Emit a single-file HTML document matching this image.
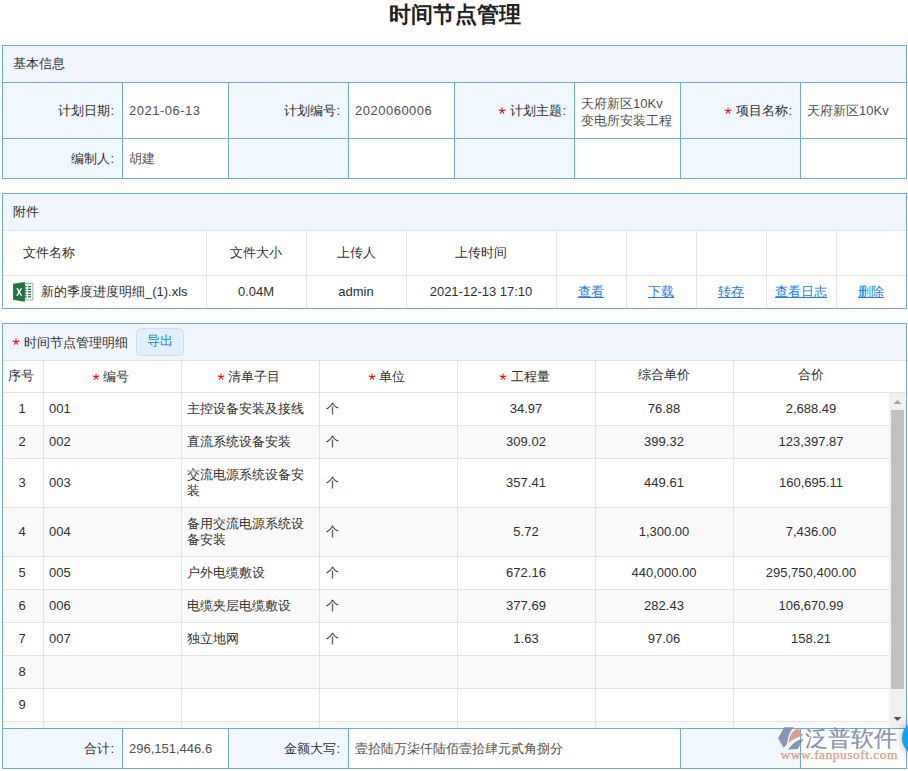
<!DOCTYPE html><html><head><meta charset="utf-8"><style>
html,body{margin:0;padding:0;background:#fff;width:908px;height:771px;overflow:hidden;position:relative}
body{font-family:"Liberation Sans",sans-serif;font-size:13px;color:#303030}
.ab{position:absolute}
.hl{position:absolute;height:1px}
.vl{position:absolute;width:1px}
.t{position:absolute;white-space:nowrap;line-height:17px}
.r{text-align:right}
.c{text-align:center}
.v{color:#505050}
.lk{color:#1e7ce8;text-decoration:underline}
</style></head><body>

<div class="t c " style="left:305.0px;width:300px;top:2px;font-size:22px;font-weight:bold;line-height:26px;color:#222">时间节点管理</div>
<div class="ab" style="left:2px;top:45px;width:905px;height:134px;background:#fff;"></div>
<div class="ab" style="left:3px;top:46px;width:903px;height:36px;background:#f0f5fe;"></div>
<div class="ab" style="left:3px;top:83px;width:119px;height:55px;background:#f0f7fe;"></div>
<div class="ab" style="left:229px;top:83px;width:119px;height:55px;background:#f0f7fe;"></div>
<div class="ab" style="left:455px;top:83px;width:119px;height:55px;background:#f0f7fe;"></div>
<div class="ab" style="left:681px;top:83px;width:119px;height:55px;background:#f0f7fe;"></div>
<div class="ab" style="left:3px;top:139px;width:119px;height:39px;background:#f0f7fe;"></div>
<div class="ab" style="left:229px;top:139px;width:119px;height:39px;background:#f0f7fe;"></div>
<div class="ab" style="left:455px;top:139px;width:119px;height:39px;background:#f0f7fe;"></div>
<div class="ab" style="left:681px;top:139px;width:119px;height:39px;background:#f0f7fe;"></div>
<div class="hl" style="left:2px;top:45px;width:905px;background:#6ea8dd"></div>
<div class="hl" style="left:2px;top:82px;width:905px;background:#6ea8dd"></div>
<div class="hl" style="left:2px;top:138px;width:905px;background:#6ea8dd"></div>
<div class="hl" style="left:2px;top:178px;width:905px;background:#6ea8dd"></div>
<div class="vl" style="left:2px;top:45px;height:134px;background:#6ea8dd"></div>
<div class="vl" style="left:122px;top:82px;height:97px;background:#6ea8dd"></div>
<div class="vl" style="left:228px;top:82px;height:97px;background:#6ea8dd"></div>
<div class="vl" style="left:348px;top:82px;height:97px;background:#6ea8dd"></div>
<div class="vl" style="left:454px;top:82px;height:97px;background:#6ea8dd"></div>
<div class="vl" style="left:574px;top:82px;height:97px;background:#6ea8dd"></div>
<div class="vl" style="left:680px;top:82px;height:97px;background:#6ea8dd"></div>
<div class="vl" style="left:800px;top:82px;height:97px;background:#6ea8dd"></div>
<div class="vl" style="left:906px;top:45px;height:134px;background:#6ea8dd"></div>
<div class="t " style="left:13px;top:55px;">基本信息</div>
<div class="t r " style="right:794px;top:102px;">计划日期:</div>
<div class="t v" style="left:129px;top:102px;letter-spacing:0.5px">2021-06-13</div>
<div class="t r " style="right:568px;top:102px;">计划编号:</div>
<div class="t v" style="left:355px;top:102px;letter-spacing:0.5px">2020060006</div>
<div class="t r " style="right:342px;top:102px;">计划主题:</div>
<svg class="ab" style="left:497.9px;top:107.2px" width="8" height="8" viewBox="-4 -4 8 8"><path d="M0 0V-3.1M0 0L-2.9 -1.1M0 0L2.9 -1.1M0 0L-1.7 2.3M0 0L1.7 2.3" stroke="#f00" stroke-width="1.05" stroke-linecap="round" fill="none"/></svg>
<div class="t v" style="left:581px;top:95px;">天府新区10Kv<br>变电所安装工程</div>
<div class="t r " style="right:116px;top:102px;">项目名称:</div>
<svg class="ab" style="left:723.9px;top:107.2px" width="8" height="8" viewBox="-4 -4 8 8"><path d="M0 0V-3.1M0 0L-2.9 -1.1M0 0L2.9 -1.1M0 0L-1.7 2.3M0 0L1.7 2.3" stroke="#f00" stroke-width="1.05" stroke-linecap="round" fill="none"/></svg>
<div class="t v" style="left:807px;top:102px;">天府新区10Kv</div>
<div class="t r " style="right:794px;top:150px;">编制人:</div>
<div class="t v" style="left:129px;top:150px;">胡建</div>
<div class="ab" style="left:2px;top:193px;width:905px;height:116px;background:#fff;"></div>
<div class="ab" style="left:3px;top:194px;width:903px;height:36px;background:#f0f5fe;"></div>
<div class="hl" style="left:2px;top:193px;width:905px;background:#6ea8dd"></div>
<div class="hl" style="left:2px;top:308px;width:905px;background:#6ea8dd"></div>
<div class="vl" style="left:2px;top:193px;height:116px;background:#6ea8dd"></div>
<div class="vl" style="left:906px;top:193px;height:116px;background:#6ea8dd"></div>
<div class="hl" style="left:3px;top:230px;width:903px;background:#e4e4e4"></div>
<div class="hl" style="left:3px;top:275px;width:903px;background:#e4e4e4"></div>
<div class="vl" style="left:206px;top:231px;height:77px;background:#e4e4e4"></div>
<div class="vl" style="left:306px;top:231px;height:77px;background:#e4e4e4"></div>
<div class="vl" style="left:406px;top:231px;height:77px;background:#e4e4e4"></div>
<div class="vl" style="left:556px;top:231px;height:77px;background:#e4e4e4"></div>
<div class="vl" style="left:626px;top:231px;height:77px;background:#e4e4e4"></div>
<div class="vl" style="left:696px;top:231px;height:77px;background:#e4e4e4"></div>
<div class="vl" style="left:766px;top:231px;height:77px;background:#e4e4e4"></div>
<div class="vl" style="left:836px;top:231px;height:77px;background:#e4e4e4"></div>
<div class="t " style="left:13px;top:203px;">附件</div>
<div class="t " style="left:23px;top:244px;">文件名称</div>
<div class="t c " style="left:106.0px;width:300px;top:244px;">文件大小</div>
<div class="t c " style="left:206.0px;width:300px;top:244px;">上传人</div>
<div class="t c " style="left:331.0px;width:300px;top:244px;">上传时间</div>
<div class="t " style="left:41px;top:283px;">新的季度进度明细_(1).xls</div>
<div class="t c " style="left:106.0px;width:300px;top:283px;">0.04M</div>
<div class="t c " style="left:206.0px;width:300px;top:283px;">admin</div>
<div class="t c " style="left:331.0px;width:300px;top:283px;">2021-12-13 17:10</div>
<div class="t c lk" style="left:556.0px;width:70px;top:283px;">查看</div>
<div class="t c lk" style="left:626.0px;width:70px;top:283px;">下载</div>
<div class="t c lk" style="left:696.0px;width:70px;top:283px;">转存</div>
<div class="t c lk" style="left:766.0px;width:70px;top:283px;">查看日志</div>
<div class="t c lk" style="left:836.0px;width:70px;top:283px;">删除</div>
<svg class="ab" style="left:12px;top:281px" width="23" height="22" viewBox="0 0 23 22">
<rect x="13" y="2.5" width="7.8" height="16.5" fill="#fff" stroke="#93bba2" stroke-width="1"/>
<g fill="#217346"><rect x="12.5" y="5" width="2" height="1.3"/><rect x="12.5" y="7.6" width="2" height="1.3"/><rect x="12.5" y="10.2" width="2" height="1.3"/><rect x="12.5" y="12.8" width="2" height="1.3"/><rect x="12.5" y="15.2" width="2" height="1.3"/>
<rect x="16" y="5" width="3" height="1.3"/><rect x="16" y="7.6" width="3" height="1.3"/><rect x="16" y="10.2" width="3" height="1.3"/><rect x="16" y="12.8" width="3" height="1.3"/><rect x="16" y="15.2" width="3" height="1.3"/></g>
<path d="M1.1 2.8 L12.9 1 L12.9 20.8 L1.1 18.8 Z" fill="#217346"/>
<path d="M4.3 7.2h1.6l1.3 2.3 1.3-2.3h1.6L8.1 10.9l2.1 3.8H8.6L7.2 12.3 5.8 14.7H4.2l2.1-3.8Z" fill="#fff"/>
</svg>
<div class="ab" style="left:2px;top:323px;width:905px;height:446px;background:#fff;"></div>
<div class="ab" style="left:3px;top:324px;width:903px;height:36px;background:#f0f5fe;"></div>
<div class="hl" style="left:2px;top:323px;width:905px;background:#6ea8dd"></div>
<div class="vl" style="left:2px;top:323px;height:446px;background:#6ea8dd"></div>
<div class="vl" style="left:906px;top:323px;height:446px;background:#6ea8dd"></div>
<div class="hl" style="left:3px;top:360px;width:903px;background:#e4e4e4"></div>
<svg class="ab" style="left:12.399999999999999px;top:338.2px" width="8" height="8" viewBox="-4 -4 8 8"><path d="M0 0V-3.1M0 0L-2.9 -1.1M0 0L2.9 -1.1M0 0L-1.7 2.3M0 0L1.7 2.3" stroke="#f00" stroke-width="1.05" stroke-linecap="round" fill="none"/></svg>
<div class="t " style="left:24px;top:334px;">时间节点管理明细</div>
<div class="ab" style="left:136px;top:328px;width:46px;height:26px;border:1px solid #cce0f4;border-radius:5px;background:#e2effc;color:#0e7ff0;text-align:center;line-height:24px">导出</div>
<div class="hl" style="left:3px;top:392px;width:903px;background:#e4e4e4"></div>
<div class="vl" style="left:43px;top:361px;height:31px;background:#e4e4e4"></div>
<div class="vl" style="left:181px;top:361px;height:31px;background:#e4e4e4"></div>
<div class="vl" style="left:319px;top:361px;height:31px;background:#e4e4e4"></div>
<div class="vl" style="left:457px;top:361px;height:31px;background:#e4e4e4"></div>
<div class="vl" style="left:595px;top:361px;height:31px;background:#e4e4e4"></div>
<div class="vl" style="left:733px;top:361px;height:31px;background:#e4e4e4"></div>
<div class="t " style="left:8px;top:367px;">序号</div>
<svg class="ab" style="left:92.4px;top:372.7px" width="8" height="8" viewBox="-4 -4 8 8"><path d="M0 0V-3.1M0 0L-2.9 -1.1M0 0L2.9 -1.1M0 0L-1.7 2.3M0 0L1.7 2.3" stroke="#f00" stroke-width="1.05" stroke-linecap="round" fill="none"/></svg>
<div class="t " style="left:103px;top:368px;">编号</div>
<svg class="ab" style="left:217.4px;top:372.7px" width="8" height="8" viewBox="-4 -4 8 8"><path d="M0 0V-3.1M0 0L-2.9 -1.1M0 0L2.9 -1.1M0 0L-1.7 2.3M0 0L1.7 2.3" stroke="#f00" stroke-width="1.05" stroke-linecap="round" fill="none"/></svg>
<div class="t " style="left:228px;top:368px;">清单子目</div>
<svg class="ab" style="left:367.9px;top:372.7px" width="8" height="8" viewBox="-4 -4 8 8"><path d="M0 0V-3.1M0 0L-2.9 -1.1M0 0L2.9 -1.1M0 0L-1.7 2.3M0 0L1.7 2.3" stroke="#f00" stroke-width="1.05" stroke-linecap="round" fill="none"/></svg>
<div class="t " style="left:379px;top:368px;">单位</div>
<svg class="ab" style="left:499.4px;top:372.7px" width="8" height="8" viewBox="-4 -4 8 8"><path d="M0 0V-3.1M0 0L-2.9 -1.1M0 0L2.9 -1.1M0 0L-1.7 2.3M0 0L1.7 2.3" stroke="#f00" stroke-width="1.05" stroke-linecap="round" fill="none"/></svg>
<div class="t " style="left:511px;top:368px;">工程量</div>
<div class="t c " style="left:514.0px;width:300px;top:366px;">综合单价</div>
<div class="t c " style="left:661.0px;width:300px;top:366px;">合价</div>
<div class="ab" style="left:3px;top:393px;width:886px;height:32px;background:#fff;"></div>
<div class="vl" style="left:43px;top:393px;height:32px;background:#e4e4e4"></div>
<div class="vl" style="left:181px;top:393px;height:32px;background:#e4e4e4"></div>
<div class="vl" style="left:319px;top:393px;height:32px;background:#e4e4e4"></div>
<div class="vl" style="left:457px;top:393px;height:32px;background:#e4e4e4"></div>
<div class="vl" style="left:595px;top:393px;height:32px;background:#e4e4e4"></div>
<div class="vl" style="left:733px;top:393px;height:32px;background:#e4e4e4"></div>
<div class="hl" style="left:3px;top:425px;width:886px;background:#e4e4e4"></div>
<div class="t c " style="left:2.0px;width:40px;top:400px;">1</div>
<div class="t " style="left:49px;top:400px;">001</div>
<div class="t " style="left:187px;top:400px;">主控设备安装及接线</div>
<div class="t " style="left:326px;top:400px;">个</div>
<div class="t c " style="left:376.0px;width:300px;top:400px;">34.97</div>
<div class="t c " style="left:514.0px;width:300px;top:400px;">76.88</div>
<div class="t c " style="left:661.0px;width:300px;top:400px;">2,688.49</div>
<div class="ab" style="left:3px;top:426px;width:886px;height:32px;background:#fafafa;"></div>
<div class="vl" style="left:43px;top:426px;height:32px;background:#e4e4e4"></div>
<div class="vl" style="left:181px;top:426px;height:32px;background:#e4e4e4"></div>
<div class="vl" style="left:319px;top:426px;height:32px;background:#e4e4e4"></div>
<div class="vl" style="left:457px;top:426px;height:32px;background:#e4e4e4"></div>
<div class="vl" style="left:595px;top:426px;height:32px;background:#e4e4e4"></div>
<div class="vl" style="left:733px;top:426px;height:32px;background:#e4e4e4"></div>
<div class="hl" style="left:3px;top:458px;width:886px;background:#e4e4e4"></div>
<div class="t c " style="left:2.0px;width:40px;top:433px;">2</div>
<div class="t " style="left:49px;top:433px;">002</div>
<div class="t " style="left:187px;top:433px;">直流系统设备安装</div>
<div class="t " style="left:326px;top:433px;">个</div>
<div class="t c " style="left:376.0px;width:300px;top:433px;">309.02</div>
<div class="t c " style="left:514.0px;width:300px;top:433px;">399.32</div>
<div class="t c " style="left:661.0px;width:300px;top:433px;">123,397.87</div>
<div class="ab" style="left:3px;top:459px;width:886px;height:48px;background:#fff;"></div>
<div class="vl" style="left:43px;top:459px;height:48px;background:#e4e4e4"></div>
<div class="vl" style="left:181px;top:459px;height:48px;background:#e4e4e4"></div>
<div class="vl" style="left:319px;top:459px;height:48px;background:#e4e4e4"></div>
<div class="vl" style="left:457px;top:459px;height:48px;background:#e4e4e4"></div>
<div class="vl" style="left:595px;top:459px;height:48px;background:#e4e4e4"></div>
<div class="vl" style="left:733px;top:459px;height:48px;background:#e4e4e4"></div>
<div class="hl" style="left:3px;top:507px;width:886px;background:#e4e4e4"></div>
<div class="t c " style="left:2.0px;width:40px;top:474px;">3</div>
<div class="t " style="left:49px;top:474px;">003</div>
<div class="t " style="left:187px;top:467px;line-height:16px">交流电源系统设备安<br>装</div>
<div class="t " style="left:326px;top:474px;">个</div>
<div class="t c " style="left:376.0px;width:300px;top:474px;">357.41</div>
<div class="t c " style="left:514.0px;width:300px;top:474px;">449.61</div>
<div class="t c " style="left:661.0px;width:300px;top:474px;">160,695.11</div>
<div class="ab" style="left:3px;top:508px;width:886px;height:48px;background:#fafafa;"></div>
<div class="vl" style="left:43px;top:508px;height:48px;background:#e4e4e4"></div>
<div class="vl" style="left:181px;top:508px;height:48px;background:#e4e4e4"></div>
<div class="vl" style="left:319px;top:508px;height:48px;background:#e4e4e4"></div>
<div class="vl" style="left:457px;top:508px;height:48px;background:#e4e4e4"></div>
<div class="vl" style="left:595px;top:508px;height:48px;background:#e4e4e4"></div>
<div class="vl" style="left:733px;top:508px;height:48px;background:#e4e4e4"></div>
<div class="hl" style="left:3px;top:556px;width:886px;background:#e4e4e4"></div>
<div class="t c " style="left:2.0px;width:40px;top:523px;">4</div>
<div class="t " style="left:49px;top:523px;">004</div>
<div class="t " style="left:187px;top:516px;line-height:16px">备用交流电源系统设<br>备安装</div>
<div class="t " style="left:326px;top:523px;">个</div>
<div class="t c " style="left:376.0px;width:300px;top:523px;">5.72</div>
<div class="t c " style="left:514.0px;width:300px;top:523px;">1,300.00</div>
<div class="t c " style="left:661.0px;width:300px;top:523px;">7,436.00</div>
<div class="ab" style="left:3px;top:557px;width:886px;height:32px;background:#fff;"></div>
<div class="vl" style="left:43px;top:557px;height:32px;background:#e4e4e4"></div>
<div class="vl" style="left:181px;top:557px;height:32px;background:#e4e4e4"></div>
<div class="vl" style="left:319px;top:557px;height:32px;background:#e4e4e4"></div>
<div class="vl" style="left:457px;top:557px;height:32px;background:#e4e4e4"></div>
<div class="vl" style="left:595px;top:557px;height:32px;background:#e4e4e4"></div>
<div class="vl" style="left:733px;top:557px;height:32px;background:#e4e4e4"></div>
<div class="hl" style="left:3px;top:589px;width:886px;background:#e4e4e4"></div>
<div class="t c " style="left:2.0px;width:40px;top:564px;">5</div>
<div class="t " style="left:49px;top:564px;">005</div>
<div class="t " style="left:187px;top:564px;">户外电缆敷设</div>
<div class="t " style="left:326px;top:564px;">个</div>
<div class="t c " style="left:376.0px;width:300px;top:564px;">672.16</div>
<div class="t c " style="left:514.0px;width:300px;top:564px;">440,000.00</div>
<div class="t c " style="left:661.0px;width:300px;top:564px;">295,750,400.00</div>
<div class="ab" style="left:3px;top:590px;width:886px;height:32px;background:#fafafa;"></div>
<div class="vl" style="left:43px;top:590px;height:32px;background:#e4e4e4"></div>
<div class="vl" style="left:181px;top:590px;height:32px;background:#e4e4e4"></div>
<div class="vl" style="left:319px;top:590px;height:32px;background:#e4e4e4"></div>
<div class="vl" style="left:457px;top:590px;height:32px;background:#e4e4e4"></div>
<div class="vl" style="left:595px;top:590px;height:32px;background:#e4e4e4"></div>
<div class="vl" style="left:733px;top:590px;height:32px;background:#e4e4e4"></div>
<div class="hl" style="left:3px;top:622px;width:886px;background:#e4e4e4"></div>
<div class="t c " style="left:2.0px;width:40px;top:597px;">6</div>
<div class="t " style="left:49px;top:597px;">006</div>
<div class="t " style="left:187px;top:597px;">电缆夹层电缆敷设</div>
<div class="t " style="left:326px;top:597px;">个</div>
<div class="t c " style="left:376.0px;width:300px;top:597px;">377.69</div>
<div class="t c " style="left:514.0px;width:300px;top:597px;">282.43</div>
<div class="t c " style="left:661.0px;width:300px;top:597px;">106,670.99</div>
<div class="ab" style="left:3px;top:623px;width:886px;height:32px;background:#fff;"></div>
<div class="vl" style="left:43px;top:623px;height:32px;background:#e4e4e4"></div>
<div class="vl" style="left:181px;top:623px;height:32px;background:#e4e4e4"></div>
<div class="vl" style="left:319px;top:623px;height:32px;background:#e4e4e4"></div>
<div class="vl" style="left:457px;top:623px;height:32px;background:#e4e4e4"></div>
<div class="vl" style="left:595px;top:623px;height:32px;background:#e4e4e4"></div>
<div class="vl" style="left:733px;top:623px;height:32px;background:#e4e4e4"></div>
<div class="hl" style="left:3px;top:655px;width:886px;background:#e4e4e4"></div>
<div class="t c " style="left:2.0px;width:40px;top:630px;">7</div>
<div class="t " style="left:49px;top:630px;">007</div>
<div class="t " style="left:187px;top:630px;">独立地网</div>
<div class="t " style="left:326px;top:630px;">个</div>
<div class="t c " style="left:376.0px;width:300px;top:630px;">1.63</div>
<div class="t c " style="left:514.0px;width:300px;top:630px;">97.06</div>
<div class="t c " style="left:661.0px;width:300px;top:630px;">158.21</div>
<div class="ab" style="left:3px;top:656px;width:886px;height:32px;background:#fafafa;"></div>
<div class="vl" style="left:43px;top:656px;height:32px;background:#e4e4e4"></div>
<div class="vl" style="left:181px;top:656px;height:32px;background:#e4e4e4"></div>
<div class="vl" style="left:319px;top:656px;height:32px;background:#e4e4e4"></div>
<div class="vl" style="left:457px;top:656px;height:32px;background:#e4e4e4"></div>
<div class="vl" style="left:595px;top:656px;height:32px;background:#e4e4e4"></div>
<div class="vl" style="left:733px;top:656px;height:32px;background:#e4e4e4"></div>
<div class="hl" style="left:3px;top:688px;width:886px;background:#e4e4e4"></div>
<div class="t c " style="left:2.0px;width:40px;top:663px;">8</div>
<div class="t " style="left:49px;top:663px;"></div>
<div class="t " style="left:187px;top:663px;"></div>
<div class="t " style="left:326px;top:663px;"></div>
<div class="t c " style="left:376.0px;width:300px;top:663px;"></div>
<div class="t c " style="left:514.0px;width:300px;top:663px;"></div>
<div class="t c " style="left:661.0px;width:300px;top:663px;"></div>
<div class="ab" style="left:3px;top:689px;width:886px;height:32px;background:#fff;"></div>
<div class="vl" style="left:43px;top:689px;height:32px;background:#e4e4e4"></div>
<div class="vl" style="left:181px;top:689px;height:32px;background:#e4e4e4"></div>
<div class="vl" style="left:319px;top:689px;height:32px;background:#e4e4e4"></div>
<div class="vl" style="left:457px;top:689px;height:32px;background:#e4e4e4"></div>
<div class="vl" style="left:595px;top:689px;height:32px;background:#e4e4e4"></div>
<div class="vl" style="left:733px;top:689px;height:32px;background:#e4e4e4"></div>
<div class="hl" style="left:3px;top:721px;width:886px;background:#e4e4e4"></div>
<div class="t c " style="left:2.0px;width:40px;top:696px;">9</div>
<div class="t " style="left:49px;top:696px;"></div>
<div class="t " style="left:187px;top:696px;"></div>
<div class="t " style="left:326px;top:696px;"></div>
<div class="t c " style="left:376.0px;width:300px;top:696px;"></div>
<div class="t c " style="left:514.0px;width:300px;top:696px;"></div>
<div class="t c " style="left:661.0px;width:300px;top:696px;"></div>
<div class="ab" style="left:3px;top:722px;width:886px;height:6px;background:#fafafa;"></div>
<div class="vl" style="left:43px;top:722px;height:6px;background:#e4e4e4"></div>
<div class="vl" style="left:181px;top:722px;height:6px;background:#e4e4e4"></div>
<div class="vl" style="left:319px;top:722px;height:6px;background:#e4e4e4"></div>
<div class="vl" style="left:457px;top:722px;height:6px;background:#e4e4e4"></div>
<div class="vl" style="left:595px;top:722px;height:6px;background:#e4e4e4"></div>
<div class="vl" style="left:733px;top:722px;height:6px;background:#e4e4e4"></div>
<div class="t c " style="left:2.0px;width:40px;top:729px;"></div>
<div class="t " style="left:49px;top:729px;"></div>
<div class="t " style="left:187px;top:729px;"></div>
<div class="t " style="left:326px;top:729px;"></div>
<div class="t c " style="left:376.0px;width:300px;top:729px;"></div>
<div class="t c " style="left:514.0px;width:300px;top:729px;"></div>
<div class="t c " style="left:661.0px;width:300px;top:729px;"></div>
<div class="ab" style="left:889px;top:393px;width:17px;height:335px;background:#f1f1f1;"></div>
<div class="ab" style="left:891px;top:410px;width:13px;height:279px;background:#c1c1c1;"></div>
<svg class="ab" style="left:889px;top:393px" width="17" height="335"><path d="M4.5 11 L8.5 7 L12.5 11Z" fill="#a3a3a3"/><path d="M4.5 324 L8.5 328 L12.5 324Z" fill="#505050"/></svg>
<div class="ab" style="left:3px;top:729px;width:903px;height:39px;background:#fff;"></div>
<div class="hl" style="left:2px;top:728px;width:905px;background:#6ea8dd"></div>
<div class="hl" style="left:2px;top:768px;width:905px;background:#6ea8dd"></div>
<div class="ab" style="left:3px;top:729px;width:119px;height:39px;background:#f0f7fe;"></div>
<div class="ab" style="left:229px;top:729px;width:119px;height:39px;background:#f0f7fe;"></div>
<div class="ab" style="left:681px;top:729px;width:119px;height:39px;background:#f0f7fe;"></div>
<div class="vl" style="left:2px;top:728px;height:41px;background:#6ea8dd"></div>
<div class="vl" style="left:122px;top:728px;height:41px;background:#6ea8dd"></div>
<div class="vl" style="left:228px;top:728px;height:41px;background:#6ea8dd"></div>
<div class="vl" style="left:348px;top:728px;height:41px;background:#6ea8dd"></div>
<div class="vl" style="left:680px;top:728px;height:41px;background:#6ea8dd"></div>
<div class="vl" style="left:800px;top:728px;height:41px;background:#6ea8dd"></div>
<div class="vl" style="left:906px;top:728px;height:41px;background:#6ea8dd"></div>
<div class="t r " style="right:794px;top:740px;">合计:</div>
<div class="t v" style="left:129px;top:740px;">296,151,446.6</div>
<div class="t r " style="right:568px;top:740px;">金额大写:</div>
<div class="t v" style="left:355px;top:740px;">壹拾陆万柒仟陆佰壹拾肆元贰角捌分</div>
<svg class="ab" style="left:770px;top:720px" width="138" height="51" viewBox="770 720 138 51">
<g opacity="0.92">
<g fill="#7d8fad">
<path d="M784.3 727.3 L793.8 727.3 Q788.5 732 787 744 L783.7 747.8 L778 738.3 Z"/>
<path d="M788 749.5 Q794 740.5 803.5 738.8 L797.8 749 Z"/>
</g>
<path d="M788.5 743.5 Q789.5 730.5 798.6 728.6 L803 736 Q794.5 737 788.5 743.5 Z" fill="#d99a80"/>
<text x="804.5" y="745.5" font-size="22" fill="#7a8cab" stroke="#7a8cab" stroke-width="0.2" font-family="Liberation Sans,sans-serif" textLength="92" lengthAdjust="spacingAndGlyphs">泛普软件</text>
<text x="780.5" y="759" font-size="13.5" fill="#d8947a" stroke="#d8947a" stroke-width="0.25" font-family="Liberation Serif,serif" textLength="117" lengthAdjust="spacing">www.fanpusoft.com</text>
</g>
</svg>
<div class="ab" style="left:902px;top:719.5px;width:36px;height:36px;border-radius:50%;background:#12a4f4;box-shadow:0 0 10px rgba(0,0,0,.3)"></div>
</body></html>
